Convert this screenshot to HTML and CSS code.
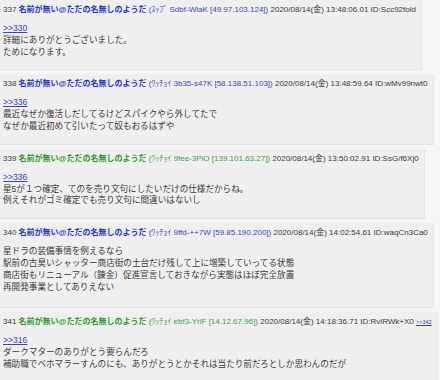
FILE: index.html
```html
<!DOCTYPE html>
<html lang="ja">
<head>
  <meta charset="UTF-8" />
  <meta name="viewport" content="width=device-width, initial-scale=1.0"/>
  <title>スレッド</title>
  <link rel="stylesheet" href="styles.css">
</head>
<body>
  <div class="thread">
    <div class="post">
      <div class="meta"><span class="num">337</span> <span class="name">名前が無い@ただの名無しのようだ</span> <span class="trip">(ｽｯﾌﾟ Sdbf-WlaK [49.97.103.124])</span> <span class="date">2020/08/14(金) 13:48:06.01</span> <span class="uid">ID:Scc92fold</span></div>
      <div class="message"><a href="#">&gt;&gt;330</a><br>詳細にありがとうございました。<br>ためになります。</div>
    </div>

    <div class="post">
      <div class="meta"><span class="num">338</span> <span class="name">名前が無い@ただの名無しのようだ</span> <span class="trip">(ﾜｯﾁｮｲ 3b35-s47K [58.138.51.103])</span> <span class="date">2020/08/14(金) 13:48:59.64</span> <span class="uid">ID:wMv99nwt0</span></div>
      <div class="message"><a href="#">&gt;&gt;336</a><br>最近なぜか復活しだしてるけどスパイクやら外してたで<br>なぜか最近初めて引いたって奴もおるはずや</div>
    </div>

    <div class="post green">
      <div class="meta"><span class="num">339</span> <span class="name">名前が無い@ただの名無しのようだ</span> <span class="trip">(ﾜｯﾁｮｲ 9fee-3PiO [139.101.63.27])</span> <span class="date">2020/08/14(金) 13:50:02.91</span> <span class="uid">ID:SsG/f6Xj0</span></div>
      <div class="message"><a href="#">&gt;&gt;336</a><br>星5が１つ確定、てのを売り文句にしたいだけの仕様だからね。<br>例えそれがゴミ確定でも売り文句に間違いはないし</div>
    </div>

    <div class="post">
      <div class="meta"><span class="num">340</span> <span class="name">名前が無い@ただの名無しのようだ</span> <span class="trip">(ﾜｯﾁｮｲ 9ffd-++7W [59.85.190.200])</span> <span class="date">2020/08/14(金) 14:02:54.61</span> <span class="uid">ID:waqCn3Ca0</span></div>
      <div class="message">星ドラの装備事情を例えるなら<br>駅前の古臭いシャッター商店街の土台だけ残して上に増築していってる状態<br>商店街もリニューアル（錬金）促進宣言しておきながら実態はほぼ完全放置<br>再開発事業としてありえない</div>
    </div>

    <div class="post green">
      <div class="meta"><span class="num">341</span> <span class="name">名前が無い@ただの名無しのようだ</span> <span class="trip">(ﾜｯﾁｮｲ ebf3-YrlF [14.12.67.96])</span> <span class="date">2020/08/14(金) 14:18:36.71</span> <span class="uid">ID:RvlRWk+X0</span> <a class="reply" href="#">&gt;&gt;342</a></div>
      <div class="message"><a href="#">&gt;&gt;316</a><br>ダークマターのありがとう要らんだろ<br>補助職でベホマラーすんのにも、ありがとうとかそれは当たり前だろとしか思わんのだが</div>
    </div>
  </div>
</body>
</html>
```

FILE: styles.css
```css
body {
  margin: 0;
  background: #f6f6f6;
  font-family: 'Liberation Sans', 'Noto Sans CJK JP', sans-serif;
  color: #3a3a3a;
}
.thread {
  display: flex;
  flex-direction: column;
  align-items: flex-start;
  gap: 4px;
}
.post {
  background: #efefef;
  border-right: 1px solid #e4e4e4;
  border-bottom: 1px solid #e4e4e4;
  padding: 4px 5px 11px 3px;
}
.meta {
  font-size: 8px;
  line-height: 12px;
  white-space: nowrap;
  margin-bottom: 7px;
}
.name {
  font-weight: bold;
  color: #2233d0;
}
.trip {
  color: #3b45c4;
}
.green .name {
  color: #2a9a2a;
}
.green .trip {
  color: #3ea33e;
}
.reply {
  font-size: 5.5px;
  color: #3344cc;
}
.message {
  font-size: 8.6px;
  line-height: 11.8px;
  white-space: nowrap;
}
.post:nth-child(4) .message {
  padding-bottom: 3px;
}
.message a {
  color: #3344cc;
}
```
